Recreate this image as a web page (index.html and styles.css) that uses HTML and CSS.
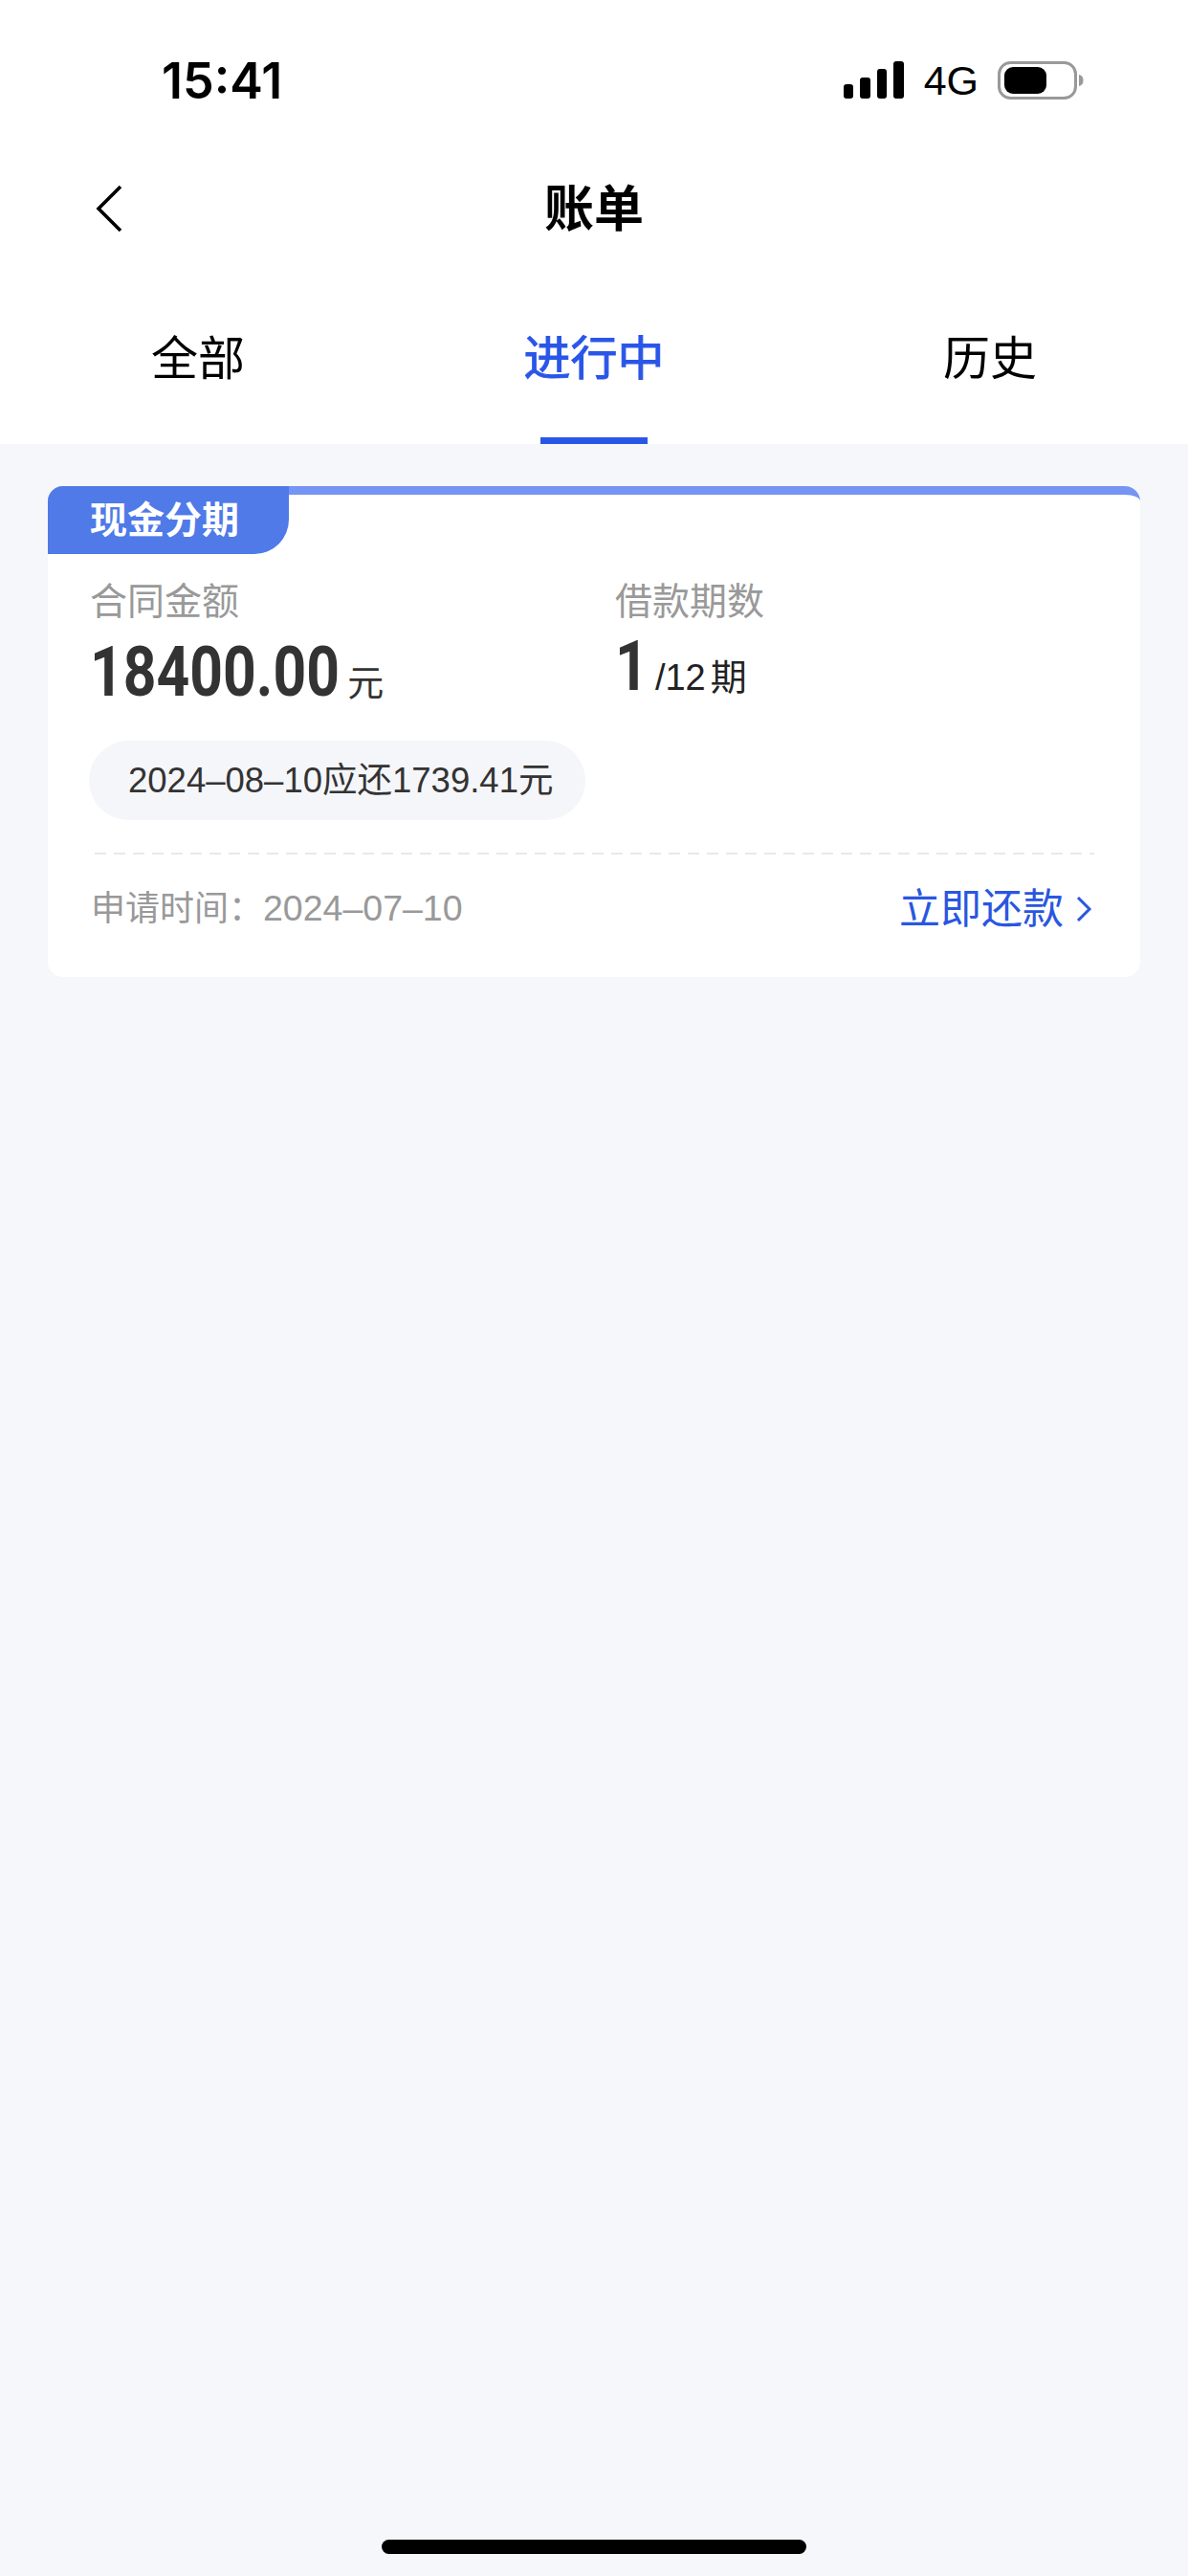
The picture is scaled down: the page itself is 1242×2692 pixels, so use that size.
FILE: index.html
```html
<!DOCTYPE html>
<html lang="zh-CN">
<head>
  <meta charset="UTF-8">
  <meta name="viewport" content="width=device-width, initial-scale=1.0">
  <title>账单</title>
  <link rel="stylesheet" href="styles.css">
</head>
<body>
  <div class="telefono">
    <header class="cabecera">
      <div class="estado">
        <span class="hora">15:41</span>
        <div class="estado-iconos">
          <svg class="senal" width="63" height="40" viewBox="0 0 63 40">
            <rect x="0" y="24" width="10" height="15" rx="3"/>
            <rect x="17" y="17" width="11" height="22" rx="3"/>
            <rect x="35" y="8" width="10" height="31" rx="3"/>
            <rect x="52" y="0" width="11" height="39" rx="3"/>
          </svg>
          <span class="red">4G</span>
          <svg class="bateria" width="90" height="40" viewBox="0 0 90 40">
            <rect x="1.500" y="1.500" width="80" height="37" rx="12" fill="none" stroke="#999" stroke-width="3"/>
            <rect x="7" y="6" width="44" height="28" rx="9" fill="#000"/>
            <path d="M85 14c3 .5 4.500 3 4.500 6s-1.500 5.500-4.500 6z" fill="#999"/>
          </svg>
        </div>
      </div>

      <div class="barra-titulo">
        <svg class="atras" width="28" height="50" viewBox="0 0 28 50">
          <path d="M26 2 3 25l23 23" fill="none" stroke="#000" stroke-width="3.600"/>
        </svg>
        <h1>账单</h1>
      </div>

      <nav class="pestanas">
        <a href="#">全部</a>
        <a href="#" class="activa">进行中</a>
        <a href="#">历史</a>
      </nav>
    </header>

    <main class="contenido">
      <section class="tarjeta">
        <div class="etiqueta">现金分期</div>
        <div class="datos">
          <div class="dato">
            <div class="dato-titulo">合同金额</div>
            <div class="dato-valor"><b class="monto">18400.00</b><span class="unidad">元</span></div>
          </div>
          <div class="dato">
            <div class="dato-titulo">借款期数</div>
            <div class="dato-valor corto"><b class="cuota">1</b><span class="periodo">/12</span><span class="unidad oscura">期</span></div>
          </div>
        </div>
        <div class="aviso">2024–08–10应还1739.41元</div>
        <div class="separador"></div>
        <div class="pie">
          <span class="fecha">申请时间：<span class="fecha-valor">2024–07–10</span></span>
          <a href="#" class="pagar">立即还款
            <svg width="17" height="28" viewBox="0 0 17 28">
              <path d="M2 2l12 12L2 26" fill="none" stroke="#2a56e0" stroke-width="3"/>
            </svg>
          </a>
        </div>
      </section>
    </main>

    <div class="inicio"></div>
  </div>
</body>
</html>
```

FILE: styles.css
```css
body {
  font-family: "Liberation Sans", "Noto Sans CJK SC", sans-serif;
  margin: 0;
  padding: 0;
  background-color: #f5f7fb;
  color: #000;
}

.telefono {
  height: 2692px;
  display: flex;
  flex-direction: column;
  overflow: hidden;
}

.cabecera {
  background-color: #fff;
  height: 464px;
}

.estado {
  height: 134px;
  padding: 0 109px 0 169px;
  display: flex;
  align-items: center;
  justify-content: space-between;
  box-sizing: border-box;
}

.hora {
  font-family: "Inter", sans-serif;
  font-size: 52px;
  font-weight: 600;
  line-height: 60px;
  margin-top: 36px;
}

.estado-iconos {
  display: flex;
  align-items: center;
  margin-top: 34px;
}

.red {
  font-size: 43px;
  line-height: 50px;
  margin: 0 20px 0 21px;
}

.bateria {
  display: block;
}

.barra-titulo {
  height: 84px;
  margin-top: 42px;
  position: relative;
  display: flex;
  align-items: center;
  justify-content: center;
}

.atras {
  position: absolute;
  left: 100px;
  top: 17px;
}

h1 {
  margin: 2px 0 0;
  font-size: 52px;
  line-height: 84px;
  font-weight: 700;
}

.pestanas {
  display: grid;
  grid-template-columns: repeat(3, 1fr);
  height: 204px;
}

.pestanas a {
  font-size: 49px;
  line-height: 58px;
  padding-top: 86px;
  text-align: center;
  text-decoration: none;
  color: #000;
  position: relative;
}

.pestanas .activa {
  color: #2a56e8;
  -webkit-text-stroke: 1px #2a56e8;
}

.pestanas .activa::after {
  content: "";
  position: absolute;
  left: 151px;
  bottom: 0;
  width: 112px;
  height: 7px;
  background-color: #2a56e8;
}

.contenido {
  flex: 1;
  padding: 44px 50px 0;
}

.tarjeta {
  background-color: #fff;
  border-top: 9px solid #7594f3;
  border-radius: 16px;
  height: 513px;
  box-sizing: border-box;
}

.etiqueta {
  width: 208px;
  height: 71px;
  margin-top: -9px;
  padding-left: 44px;
  background-color: #4f7ae8;
  border-radius: 16px 0 36px 0;
  color: #fff;
  font-size: 39px;
  font-weight: 700;
  line-height: 71px;
}

.datos {
  display: flex;
  padding: 22px 0 0 44px;
}

.dato {
  width: 550px;
}

.dato-titulo {
  font-size: 39px;
  line-height: 56px;
  color: #999;
}

.dato-valor {
  height: 84px;
  margin-top: 3px;
  line-height: 84px;
  color: #333;
}

.dato-valor.corto {
  margin-top: -3px;
}

.dato-valor b {
  display: inline-block;
  font-family: "Roboto", sans-serif;
  font-size: 73px;
  font-weight: 700;
  transform: scaleX(.83);
  transform-origin: left;
}

.monto {
  margin-right: -53px;
}

.cuota {
  margin-right: -11px;
}

.unidad {
  font-size: 38px;
  margin-left: 8px;
  color: #333;
}

.periodo {
  font-size: 38px;
  margin-left: 11px;
  color: #222;
}

.unidad.oscura {
  margin-left: 5px;
  color: #222;
}

.aviso {
  display: inline-block;
  margin: 30px 0 0 43px;
  padding: 0 34px 0 41px;
  height: 83px;
  line-height: 83px;
  border-radius: 42px;
  background-color: #f5f6fa;
  font-size: 36.500px;
  color: #333;
}

.separador {
  height: 2px;
  margin: 34px 48px 0 49px;
  background-image: linear-gradient(to right, #e9e9ec 12px, transparent 12px);
  background-size: 20px 2px;
}

.pie {
  display: flex;
  align-items: center;
  justify-content: space-between;
  padding: 26px 50px 0 45px;
}

.fecha {
  font-size: 36px;
  line-height: 60px;
  color: #999;
}

.fecha-valor {
  font-size: 37.500px;
}

.pagar {
  display: flex;
  align-items: center;
  gap: 13px;
  font-size: 43px;
  line-height: 60px;
  color: #2a56e0;
  text-decoration: none;
}

.inicio {
  position: absolute;
  left: 399px;
  top: 2654px;
  width: 444px;
  height: 15px;
  border-radius: 8px;
  background-color: #000;
}
```
